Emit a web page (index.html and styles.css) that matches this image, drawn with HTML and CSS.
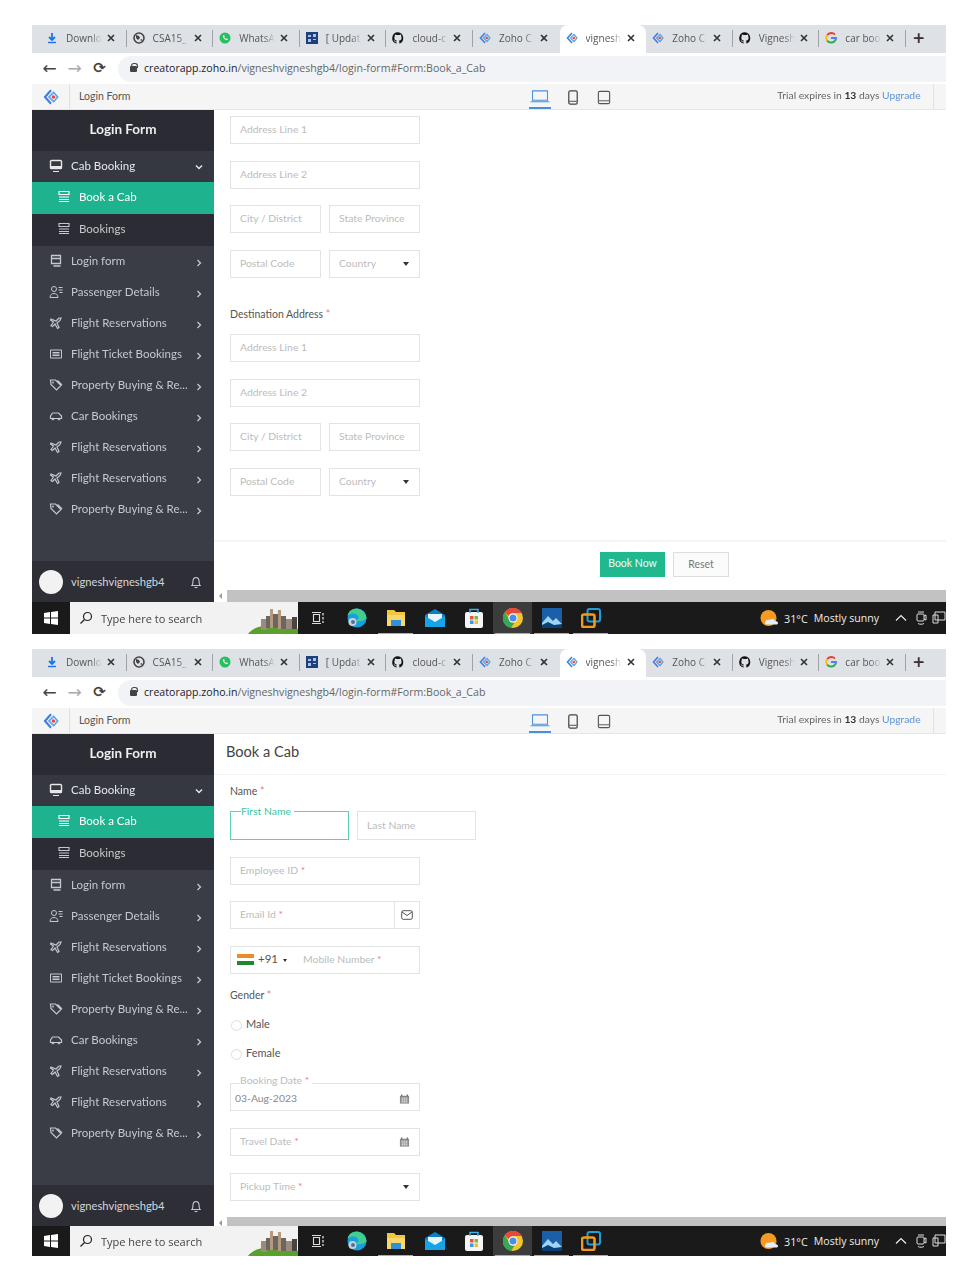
FILE: index.html
```html
<!DOCTYPE html>
<html lang="en">
<head>
<meta charset="utf-8">
<title>Book a Cab</title>
<link rel="stylesheet" href="styles.css">
</head>
<body>
<svg class="defs" xmlns="http://www.w3.org/2000/svg">
  <symbol id="f-dl" viewBox="0 0 12 12"><path d="M6 1v6.500M3 5l3 3 3-3" fill="none" stroke="#1a73e8" stroke-width="1.800"/><path d="M2 10.500h8" stroke="#1a73e8" stroke-width="1.400"/></symbol>
  <symbol id="f-globe" viewBox="0 0 12 12"><circle cx="6" cy="6" r="5" fill="none" stroke="#444" stroke-width="1.600"/><path d="M3 3l3 1 1 2-2 2-2-2zM7 8l2-1v2z" fill="#444"/></symbol>
  <symbol id="f-wa" viewBox="0 0 12 12"><circle cx="6" cy="6" r="5.500" fill="#25c15f"/><path d="M4 3.500c-.6 2 1.800 4.700 4.300 4.700l.6-1.200-1.400-.7-.6.6c-.8-.4-1.300-1-1.700-1.700l.6-.6-.7-1.400z" fill="#fff"/></symbol>
  <symbol id="f-sq" viewBox="0 0 12 12"><rect width="12" height="12" fill="#1f3f7a"/><path d="M2 3h3v2H2zM7 2h3v3H7zM2 7h3v3H2zM7 7h3v1H7z" fill="#a9c2ea"/></symbol>
  <symbol id="f-gh" viewBox="0 0 12 12"><path d="M6 .3a5.800 5.800 0 0 0-1.800 11.300c.3 0 .4-.1.4-.3v-1c-1.600.3-2-.7-2-.7-.3-.7-.7-.9-.7-.9-.5-.4 0-.4 0-.4.6 0 .9.600.9.600.5.900 1.400.600 1.800.500 0-.4.200-.6.400-.8-1.300-.1-2.700-.6-2.700-2.900 0-.6.200-1.200.6-1.600-.1-.2-.3-.8 0-1.600 0 0 .5-.1 1.600.6a5.500 5.500 0 0 1 2.900 0c1.100-.7 1.600-.6 1.600-.6.300.8.100 1.400 0 1.600.4.400.6 1 .6 1.600 0 2.300-1.400 2.800-2.700 2.900.2.200.4.500.4 1v1.500c0 .2.100.3.400.3A5.800 5.800 0 0 0 6 .3z" fill="#111"/></symbol>
  <symbol id="f-zoho" viewBox="0 0 12 12"><path d="M6 1 1.500 6 6 11" fill="none" stroke="#3f7fe0" stroke-width="1.600"/><path d="M8 2.500 4.500 6 8 9.500 11 6z" fill="none" stroke="#5aa0e8" stroke-width="1.200"/><circle cx="7.800" cy="6" r="1.300" fill="#e8473f"/></symbol>
  <symbol id="f-g" viewBox="0 0 12 12"><path d="M10 2.600A5 5 0 0 0 2.200 3.300" fill="none" stroke="#ea4335" stroke-width="2"/><path d="M2.200 3.300a5 5 0 0 0 0 5.400" fill="none" stroke="#fbbc05" stroke-width="2"/><path d="M2.200 8.700A5 5 0 0 0 10.500 8" fill="none" stroke="#34a853" stroke-width="2"/><path d="M6 6h5a5 5 0 0 1-.5 2" fill="none" stroke="#4285f4" stroke-width="2"/></symbol>
  <symbol id="x" viewBox="0 0 8 8"><path d="M1 1l6 6M7 1 1 7" stroke="#333" stroke-width="1.600"/></symbol>

  <symbol id="s-mon" viewBox="0 0 14 14"><rect x="1.500" y="1.500" width="11" height="8" rx="1" fill="none" stroke="currentColor" stroke-width="1.400"/><path d="M1.500 7.500h11v2h-11zM4 12.500h6" fill="currentColor" stroke="currentColor"/></symbol>
  <symbol id="s-list" viewBox="0 0 14 14"><path d="M2 2.500h10v3H2zM2 8h10" fill="none" stroke="currentColor" stroke-width="1.100"/><path d="M2 10.500h10M2 12.500h10" stroke="currentColor" stroke-width="1.100"/></symbol>
  <symbol id="s-form" viewBox="0 0 14 14"><path d="M2.500 1.500h9v8h-9zM2.500 4.500h9M4.500 12h7" fill="none" stroke="currentColor" stroke-width="1.300"/></symbol>
  <symbol id="s-user" viewBox="0 0 14 14"><circle cx="5" cy="4" r="2.500" fill="none" stroke="currentColor"/><path d="M1 12.500c0-3 2-4 4-4s4 1 4 4zM9.500 2.500h4M9.500 5h4M10.500 7.500h3" fill="none" stroke="currentColor"/></symbol>
  <symbol id="s-fly" viewBox="0 0 14 14"><path d="M2 3l5 2 3-3 2 0-1 2.500-3 2.500 2 4.500-1.500 1L6 8 3.500 10.500 2 9.500 4.500 6 1.500 4z" fill="none" stroke="currentColor" stroke-width="1.200"/></symbol>
  <symbol id="s-tick" viewBox="0 0 14 14"><path d="M1.500 3h11v8h-11zM3.500 5.500h7M3.500 7h7M3.500 8.500h7" fill="none" stroke="currentColor" stroke-width="1"/></symbol>
  <symbol id="s-tag" viewBox="0 0 14 14"><path d="M1.500 2h5l5.500 5.500-4.500 4.500L2 6.500zM8.500 2.500l4.500 4.500" fill="none" stroke="currentColor" stroke-width="1.200"/><circle cx="4" cy="4.500" r=".9" fill="currentColor"/></symbol>
  <symbol id="s-car" viewBox="0 0 14 14"><path d="M1.500 9.500V7l2-3h6l3 3v2.500z" fill="none" stroke="currentColor" stroke-width="1.200"/><circle cx="4" cy="10" r="1.300" fill="currentColor"/><circle cx="10" cy="10" r="1.300" fill="currentColor"/></symbol>
  <symbol id="s-bell" viewBox="0 0 14 14"><path d="M3 10.500c1-1 .8-3 1-5 .3-2 1.500-3 3-3s2.700 1 3 3c.2 2 0 4 1 5zM5.500 12.500h3" fill="none" stroke="currentColor" stroke-width="1.100"/></symbol>
  <symbol id="s-right" viewBox="0 0 6 8"><path d="M1.500 1 4.500 4l-3 3" fill="none" stroke="currentColor" stroke-width="1.300"/></symbol>
  <symbol id="s-down" viewBox="0 0 8 6"><path d="M1 1.500l3 3 3-3" fill="none" stroke="currentColor" stroke-width="1.500"/></symbol>

  <symbol id="d-lap" viewBox="0 0 22 16"><path d="M3 2h16v10H3zM1 13.500h20" fill="none" stroke="#4a90d9" stroke-width="1.100"/></symbol>
  <symbol id="d-ph" viewBox="0 0 12 16"><rect x="1.500" y="1" width="9" height="14" rx="1.500" fill="none" stroke="#444" stroke-width="1.300"/><path d="M2 12h8" stroke="#444"/></symbol>
  <symbol id="d-tab" viewBox="0 0 14 16"><rect x="1" y="1.500" width="12" height="13" rx="1.500" fill="none" stroke="#555" stroke-width="1.200"/><path d="M1.500 11.500h11" stroke="#555"/></symbol>
  <symbol id="mail" viewBox="0 0 12 10"><rect x=".7" y=".7" width="10.600" height="8.600" rx="1.500" fill="none" stroke="#555"/><path d="M1 2l5 3.500L11 2" fill="none" stroke="#555"/></symbol>
  <symbol id="cal" viewBox="0 0 12 12"><path d="M1 2.500h10V11H1z" fill="#888"/><path d="M3 1v2M9 1v2" stroke="#555" stroke-width="1.200"/><path d="M2 5h8M2 7h8M2 9h8M4 4.500V10.500M6 4.500V10.500M8 4.500V10.500" stroke="#e8e8e8" stroke-width=".6"/></symbol>

  <symbol id="t-win" viewBox="0 0 14 14"><path d="M0 2l6-1v5.500H0zM7 .9 14 0v6.500H7zM0 7.500h6V13l-6-1zM7 7.500h7V14l-7-1z" fill="#fff"/></symbol>
  <symbol id="t-search" viewBox="0 0 14 14"><circle cx="8.500" cy="5.500" r="4" fill="none" stroke="#222" stroke-width="1.200"/><path d="M5.500 8.500 1.500 12.500" stroke="#222" stroke-width="1.300"/></symbol>
  <symbol id="t-view" viewBox="0 0 14 14"><path d="M2.500 3.500h6v7h-6zM1 1.500h9M1 12.500h9" fill="none" stroke="#ddd" stroke-width="1.100"/><path d="M12 2v2.500M12 6v2.500M12 10v2" stroke="#ddd" stroke-width="1.300"/></symbol>
  <symbol id="t-edge" viewBox="0 0 20 20"><circle cx="10" cy="10" r="9.500" fill="#1b9de2"/><path d="M19.500 10C19 4.500 14 .5 9.500.5 5 .5 1 3.500.500 8c2-3 9-4 11 1 .5 2-1 3-3 3 2 2 7 2 11.500-2z" fill="#3fd08f"/><circle cx="5.500" cy="14" r="4" fill="#c7d2dc"/><circle cx="6" cy="14" r="2" fill="#56738c"/></symbol>
  <symbol id="t-files" viewBox="0 0 20 18"><path d="M1 1h7l2 2h9v14H1z" fill="#f4c542"/><path d="M1 6h18v11H1z" fill="#f9d86b"/><path d="M5 11h10v6H5z" fill="#2f8fd8"/></symbol>
  <symbol id="t-mail" viewBox="0 0 20 18"><path d="M0 6 10 0l10 6v12H0z" fill="#0b7fc7"/><path d="M3 5h14v6l-7 3-7-3z" fill="#e9f5fc"/><path d="M0 7l10 6 10-6v11H0z" fill="#15a5e6"/></symbol>
  <symbol id="t-store" viewBox="0 0 20 20"><rect x="1" y="4" width="18" height="16" rx="2" fill="#f5f5f5"/><path d="M6 5V1.500h8V5" fill="none" stroke="#3cb6e8" stroke-width="1.500"/><path d="M6 8h3.500v3.500H6z" fill="#e8533f"/><path d="M10.500 8H14v3.500h-3.500z" fill="#7fba3a"/><path d="M6 12.500h3.500V16H6z" fill="#2f9bea"/><path d="M10.500 12.500H14V16h-3.500z" fill="#f4bc2f"/></symbol>
  <symbol id="t-chrome" viewBox="0 0 20 20"><circle cx="10" cy="10" r="10" fill="#f4c430"/><path d="M10 0a10 10 0 0 1 8.700 5H10a5 5 0 0 0-4.600 3L1.800 3.900A10 10 0 0 1 10 0z" fill="#e5483c"/><path d="M1.800 3.900 6 11a5 5 0 0 0 5.500 3.800L8 20A10 10 0 0 1 1.800 3.900z" fill="#3aa757"/><circle cx="10" cy="10" r="4.500" fill="#fff"/><circle cx="10" cy="10" r="3.500" fill="#4b8cf0"/></symbol>
  <symbol id="t-photo" viewBox="0 0 20 20"><rect width="20" height="20" fill="#1b5fa8"/><path d="M0 15l6-7 5 5 3-3 6 6v4H0z" fill="#9fd4f5"/><path d="M0 20v-3l6-3 6 3 8-1v4z" fill="#0b3f78"/></symbol>
  <symbol id="t-copy" viewBox="0 0 20 20"><rect x="6.500" y="1" width="12.500" height="12.500" rx="2" fill="none" stroke="#1f9fd6" stroke-width="2"/><rect x="1" y="6.500" width="12.500" height="12.500" rx="2" fill="none" stroke="#f29a1f" stroke-width="2.600"/></symbol>
  <symbol id="t-sun" viewBox="0 0 18 18"><circle cx="8.500" cy="9" r="8" fill="#f59b23"/><path d="M5 14c0-3 3-4 5-3 1-2 5-1 5 1 2 0 3 1 3 2s-1 1.500-2 1.500H7c-1 0-2-.5-2-1.500z" fill="#e6eef5"/></symbol>
  <symbol id="t-up" viewBox="0 0 12 8"><path d="M1 6.500 6 1.500l5 5" fill="none" stroke="#eee" stroke-width="1.200"/></symbol>
  <symbol id="t-meet" viewBox="0 0 12 14"><rect x="2" y="3" width="7" height="7" rx="1" fill="none" stroke="#ddd"/><path d="M3 1h6M3 12.500c2 1 4 1 6 0M9 5l2-1v5l-2-1" fill="none" stroke="#ddd"/></symbol>
  <symbol id="t-net" viewBox="0 0 14 14"><path d="M3 1h10v8H3zM1 4h5v8H1z" fill="#1a1a1a" stroke="#ddd"/></symbol>
  <symbol id="t-city" viewBox="0 0 50 28"><path d="M0 28c6-8 18-10 26-7 8-3 18-2 24 2v5z" fill="#5aa02c"/><path d="M13 13h6v11h-6zM38 13h6v10h-6z" fill="#9a8b7d"/><path d="M22 3h3v19h-3zM30 4h3v19h-3z" fill="#b39a7c"/><path d="M25 8h5v14h-5zM18 10h4v12h-4zM33 10h5v13h-5z" fill="#6c6560"/><path d="M44 11h5v12h-5z" fill="#4a4540"/></symbol>
</svg>

<section class="shot">
  <div class="tabs">
    <div class="tab"><svg class="fav"><use href="#f-dl"/></svg><span class="tab-t">Downlo</span><svg class="close"><use href="#x"/></svg></div>
    <div class="tab"><svg class="fav"><use href="#f-globe"/></svg><span class="tab-t">CSA15_</span><svg class="close"><use href="#x"/></svg></div>
    <div class="tab"><svg class="fav"><use href="#f-wa"/></svg><span class="tab-t">WhatsA</span><svg class="close"><use href="#x"/></svg></div>
    <div class="tab"><svg class="fav"><use href="#f-sq"/></svg><span class="tab-t">[ Updat</span><svg class="close"><use href="#x"/></svg></div>
    <div class="tab"><svg class="fav"><use href="#f-gh"/></svg><span class="tab-t">cloud-c</span><svg class="close"><use href="#x"/></svg></div>
    <div class="tab"><svg class="fav"><use href="#f-zoho"/></svg><span class="tab-t">Zoho C</span><svg class="close"><use href="#x"/></svg></div>
    <div class="tab tab-on"><svg class="fav"><use href="#f-zoho"/></svg><span class="tab-t">vignesh</span><svg class="close"><use href="#x"/></svg></div>
    <div class="tab"><svg class="fav"><use href="#f-zoho"/></svg><span class="tab-t">Zoho C</span><svg class="close"><use href="#x"/></svg></div>
    <div class="tab"><svg class="fav"><use href="#f-gh"/></svg><span class="tab-t">Vignesh</span><svg class="close"><use href="#x"/></svg></div>
    <div class="tab"><svg class="fav"><use href="#f-g"/></svg><span class="tab-t">car boo</span><svg class="close"><use href="#x"/></svg></div>
    <span class="plus">+</span>
  </div>
  <div class="toolbar">
    <span class="nav">←</span><span class="nav nav-off">→</span><span class="nav nav-re">⟳</span>
    <div class="pill"><span class="lock"></span><span class="url"><b>creatorapp.zoho.in</b>/vigneshvigneshgb4/login-form#Form:Book_a_Cab</span></div>
  </div>
  <div class="appbar">
    <div class="logo"><svg class="logo-i"><use href="#f-zoho"/></svg></div>
    <span class="app-name">Login Form</span>
    <div class="devices">
      <svg class="dev dev-on"><use href="#d-lap"/></svg>
      <svg class="dev"><use href="#d-ph"/></svg>
      <svg class="dev"><use href="#d-tab"/></svg>
    </div>
    <div class="trial">Trial expires in <b>13</b> days <a class="up">Upgrade</a></div>
  </div>
  <div class="main">
    <aside class="side">
      <div class="side-title">Login Form</div>
      <div class="row row-open"><svg class="ic"><use href="#s-mon"/></svg><span class="lbl">Cab Booking</span><svg class="chev-d"><use href="#s-down"/></svg></div>
      <div class="row sub sub-on"><svg class="ic"><use href="#s-list"/></svg><span class="lbl">Book a Cab</span></div>
      <div class="row sub"><svg class="ic"><use href="#s-list"/></svg><span class="lbl">Bookings</span></div>
      <div class="row"><svg class="ic"><use href="#s-form"/></svg><span class="lbl">Login form</span><svg class="chev"><use href="#s-right"/></svg></div>
      <div class="row"><svg class="ic"><use href="#s-user"/></svg><span class="lbl">Passenger Details</span><svg class="chev"><use href="#s-right"/></svg></div>
      <div class="row"><svg class="ic"><use href="#s-fly"/></svg><span class="lbl">Flight Reservations</span><svg class="chev"><use href="#s-right"/></svg></div>
      <div class="row"><svg class="ic"><use href="#s-tick"/></svg><span class="lbl">Flight Ticket Bookings</span><svg class="chev"><use href="#s-right"/></svg></div>
      <div class="row"><svg class="ic"><use href="#s-tag"/></svg><span class="lbl">Property Buying &amp; Re...</span><svg class="chev"><use href="#s-right"/></svg></div>
      <div class="row"><svg class="ic"><use href="#s-car"/></svg><span class="lbl">Car Bookings</span><svg class="chev"><use href="#s-right"/></svg></div>
      <div class="row"><svg class="ic"><use href="#s-fly"/></svg><span class="lbl">Flight Reservations</span><svg class="chev"><use href="#s-right"/></svg></div>
      <div class="row"><svg class="ic"><use href="#s-fly"/></svg><span class="lbl">Flight Reservations</span><svg class="chev"><use href="#s-right"/></svg></div>
      <div class="row"><svg class="ic"><use href="#s-tag"/></svg><span class="lbl">Property Buying &amp; Re...</span><svg class="chev"><use href="#s-right"/></svg></div>
      <div class="side-foot"><span class="avatar"></span><span class="uname">vigneshvigneshgb4</span><svg class="bell"><use href="#s-bell"/></svg></div>
    </aside>
    <div class="content">
      <div class="form form-top">
        <div class="f w-full">Address Line 1</div>
        <div class="f w-full">Address Line 2</div>
        <div class="pair"><div class="f">City / District</div><div class="f">State Province</div></div>
        <div class="pair"><div class="f">Postal Code</div><div class="f f-sel">Country<i class="caret"></i></div></div>
        <div class="label label-dest">Destination Address <em>*</em></div>
        <div class="f w-full">Address Line 1</div>
        <div class="f w-full">Address Line 2</div>
        <div class="pair"><div class="f">City / District</div><div class="f">State Province</div></div>
        <div class="pair"><div class="f">Postal Code</div><div class="f f-sel">Country<i class="caret"></i></div></div>
      </div>
      <div class="actions"><span class="btn btn-go">Book Now</span><span class="btn btn-reset">Reset</span></div>
      <div class="hscroll"><span class="hs-left"></span><span class="hs-thumb"></span></div>
    </div>
  </div>
  <div class="taskbar">
    <div class="start"><svg class="win"><use href="#t-win"/></svg></div>
    <div class="search"><svg class="s-ic"><use href="#t-search"/></svg><span class="s-txt">Type here to search</span><svg class="city"><use href="#t-city"/></svg></div>
    <div class="apps">
      <span class="app"><svg class="a-sm"><use href="#t-view"/></svg></span>
      <span class="app"><svg class="a-ic"><use href="#t-edge"/></svg></span>
      <span class="app app-run"><svg class="a-ic"><use href="#t-files"/></svg></span>
      <span class="app"><svg class="a-ic"><use href="#t-mail"/></svg></span>
      <span class="app"><svg class="a-ic"><use href="#t-store"/></svg></span>
      <span class="app app-run app-act"><svg class="a-ic"><use href="#t-chrome"/></svg></span>
      <span class="app app-run"><svg class="a-ic"><use href="#t-photo"/></svg></span>
      <span class="app app-run"><svg class="a-ic"><use href="#t-copy"/></svg></span>
    </div>
    <div class="tray"><svg class="sun"><use href="#t-sun"/></svg><span class="temp">31°C</span><span class="wx">Mostly sunny</span><svg class="up-i"><use href="#t-up"/></svg><svg class="meet"><use href="#t-meet"/></svg><svg class="net"><use href="#t-net"/></svg></div>
  </div>
</section>

<section class="shot shot-b">
  <div class="tabs">
    <div class="tab"><svg class="fav"><use href="#f-dl"/></svg><span class="tab-t">Downlo</span><svg class="close"><use href="#x"/></svg></div>
    <div class="tab"><svg class="fav"><use href="#f-globe"/></svg><span class="tab-t">CSA15_</span><svg class="close"><use href="#x"/></svg></div>
    <div class="tab"><svg class="fav"><use href="#f-wa"/></svg><span class="tab-t">WhatsA</span><svg class="close"><use href="#x"/></svg></div>
    <div class="tab"><svg class="fav"><use href="#f-sq"/></svg><span class="tab-t">[ Updat</span><svg class="close"><use href="#x"/></svg></div>
    <div class="tab"><svg class="fav"><use href="#f-gh"/></svg><span class="tab-t">cloud-c</span><svg class="close"><use href="#x"/></svg></div>
    <div class="tab"><svg class="fav"><use href="#f-zoho"/></svg><span class="tab-t">Zoho C</span><svg class="close"><use href="#x"/></svg></div>
    <div class="tab tab-on"><svg class="fav"><use href="#f-zoho"/></svg><span class="tab-t">vignesh</span><svg class="close"><use href="#x"/></svg></div>
    <div class="tab"><svg class="fav"><use href="#f-zoho"/></svg><span class="tab-t">Zoho C</span><svg class="close"><use href="#x"/></svg></div>
    <div class="tab"><svg class="fav"><use href="#f-gh"/></svg><span class="tab-t">Vignesh</span><svg class="close"><use href="#x"/></svg></div>
    <div class="tab"><svg class="fav"><use href="#f-g"/></svg><span class="tab-t">car boo</span><svg class="close"><use href="#x"/></svg></div>
    <span class="plus">+</span>
  </div>
  <div class="toolbar">
    <span class="nav">←</span><span class="nav nav-off">→</span><span class="nav nav-re">⟳</span>
    <div class="pill"><span class="lock"></span><span class="url"><b>creatorapp.zoho.in</b>/vigneshvigneshgb4/login-form#Form:Book_a_Cab</span></div>
  </div>
  <div class="appbar">
    <div class="logo"><svg class="logo-i"><use href="#f-zoho"/></svg></div>
    <span class="app-name">Login Form</span>
    <div class="devices">
      <svg class="dev dev-on"><use href="#d-lap"/></svg>
      <svg class="dev"><use href="#d-ph"/></svg>
      <svg class="dev"><use href="#d-tab"/></svg>
    </div>
    <div class="trial">Trial expires in <b>13</b> days <a class="up">Upgrade</a></div>
  </div>
  <div class="main">
    <aside class="side">
      <div class="side-title">Login Form</div>
      <div class="row row-open"><svg class="ic"><use href="#s-mon"/></svg><span class="lbl">Cab Booking</span><svg class="chev-d"><use href="#s-down"/></svg></div>
      <div class="row sub sub-on"><svg class="ic"><use href="#s-list"/></svg><span class="lbl">Book a Cab</span></div>
      <div class="row sub"><svg class="ic"><use href="#s-list"/></svg><span class="lbl">Bookings</span></div>
      <div class="row"><svg class="ic"><use href="#s-form"/></svg><span class="lbl">Login form</span><svg class="chev"><use href="#s-right"/></svg></div>
      <div class="row"><svg class="ic"><use href="#s-user"/></svg><span class="lbl">Passenger Details</span><svg class="chev"><use href="#s-right"/></svg></div>
      <div class="row"><svg class="ic"><use href="#s-fly"/></svg><span class="lbl">Flight Reservations</span><svg class="chev"><use href="#s-right"/></svg></div>
      <div class="row"><svg class="ic"><use href="#s-tick"/></svg><span class="lbl">Flight Ticket Bookings</span><svg class="chev"><use href="#s-right"/></svg></div>
      <div class="row"><svg class="ic"><use href="#s-tag"/></svg><span class="lbl">Property Buying &amp; Re...</span><svg class="chev"><use href="#s-right"/></svg></div>
      <div class="row"><svg class="ic"><use href="#s-car"/></svg><span class="lbl">Car Bookings</span><svg class="chev"><use href="#s-right"/></svg></div>
      <div class="row"><svg class="ic"><use href="#s-fly"/></svg><span class="lbl">Flight Reservations</span><svg class="chev"><use href="#s-right"/></svg></div>
      <div class="row"><svg class="ic"><use href="#s-fly"/></svg><span class="lbl">Flight Reservations</span><svg class="chev"><use href="#s-right"/></svg></div>
      <div class="row"><svg class="ic"><use href="#s-tag"/></svg><span class="lbl">Property Buying &amp; Re...</span><svg class="chev"><use href="#s-right"/></svg></div>
      <div class="side-foot"><span class="avatar"></span><span class="uname">vigneshvigneshgb4</span><svg class="bell"><use href="#s-bell"/></svg></div>
    </aside>
    <div class="content">
      <h1 class="page-h">Book a Cab</h1>
      <div class="form form-b">
        <div class="label label-name">Name <em>*</em></div>
        <div class="names"><div class="f f-focus"><span class="float float-on">First Name</span></div><div class="f">Last Name</div></div>
        <div class="f w-full">Employee ID <em>*</em></div>
        <div class="f w-full f-mail"><span>Email Id <em>*</em></span><span class="addon"><svg class="mail"><use href="#mail"/></svg></span></div>
        <div class="f w-full f-tel"><span class="flag"></span><span class="cc">+91</span><i class="caret caret-sm"></i><span class="tel-ph">Mobile Number <em>*</em></span></div>
        <div class="label label-g">Gender <em>*</em></div>
        <div class="radio"><span class="r-dot"></span>Male</div>
        <div class="radio"><span class="r-dot"></span>Female</div>
        <div class="f w-full f-date f-val"><span class="float">Booking Date <em>*</em></span><span>03-Aug-2023</span><svg class="cal"><use href="#cal"/></svg></div>
        <div class="f w-full f-date"><span>Travel Date <em>*</em></span><svg class="cal"><use href="#cal"/></svg></div>
        <div class="f w-full f-sel">Pickup Time <em>*</em><i class="caret"></i></div>
      </div>
      <div class="hscroll"><span class="hs-left"></span><span class="hs-thumb"></span></div>
    </div>
  </div>
  <div class="taskbar">
    <div class="start"><svg class="win"><use href="#t-win"/></svg></div>
    <div class="search"><svg class="s-ic"><use href="#t-search"/></svg><span class="s-txt">Type here to search</span><svg class="city"><use href="#t-city"/></svg></div>
    <div class="apps">
      <span class="app"><svg class="a-sm"><use href="#t-view"/></svg></span>
      <span class="app"><svg class="a-ic"><use href="#t-edge"/></svg></span>
      <span class="app app-run"><svg class="a-ic"><use href="#t-files"/></svg></span>
      <span class="app"><svg class="a-ic"><use href="#t-mail"/></svg></span>
      <span class="app"><svg class="a-ic"><use href="#t-store"/></svg></span>
      <span class="app app-run app-act"><svg class="a-ic"><use href="#t-chrome"/></svg></span>
      <span class="app app-run"><svg class="a-ic"><use href="#t-photo"/></svg></span>
      <span class="app app-run"><svg class="a-ic"><use href="#t-copy"/></svg></span>
    </div>
    <div class="tray"><svg class="sun"><use href="#t-sun"/></svg><span class="temp">31°C</span><span class="wx">Mostly sunny</span><svg class="up-i"><use href="#t-up"/></svg><svg class="meet"><use href="#t-meet"/></svg><svg class="net"><use href="#t-net"/></svg></div>
  </div>
</section>
</body>
</html>
```

FILE: styles.css
```css
* { box-sizing: border-box; }
html, body { margin: 0; height: 100%; background: #fff; }
body { padding: 25px 0 0 32px; font-family: Lato, "Liberation Sans", sans-serif; overflow: hidden; }
.defs { display: none; }

.shot { width: 914px; height: 609px; margin-bottom: 15px; display: flex; flex-direction: column; overflow: hidden; filter: blur(.45px); }
.shot-b { height: 607px; margin-bottom: 0; }

/* browser tabs */
.tabs { height: 28px; background: #dee1e6; display: flex; align-items: stretch; padding-left: 8px; flex: none; }
.tab { width: 86.6px; flex: none; padding: 0 8px 2px 6px; display: flex; align-items: center; position: relative; }
.tab::after { content: ""; position: absolute; right: 0; top: 5px; width: 1px; height: 17px; background: #9ea3a9; }
.tab:nth-child(6)::after, .tab:nth-child(7)::after { display: none; }
.tab-on { background: #fff; border-radius: 8px 8px 0 0; }
.fav { width: 12px; height: 12px; flex: none; }
.tab-t { font: 10px "Open Sans", sans-serif; color: #555; margin-left: 8px; width: 38px; flex: none; white-space: nowrap; -webkit-mask-image: linear-gradient(90deg, #000 65%, transparent 95%); mask-image: linear-gradient(90deg, #000 65%, transparent 95%); }
.close { width: 8px; height: 8px; margin-left: 3px; flex: none; }
.plus { font: 600 20px/26px "Open Sans", sans-serif; color: #333; margin-left: 7px; }

/* address bar */
.toolbar { height: 31px; background: #fff; display: flex; align-items: center; padding-left: 5px; flex: none; }
.nav { width: 25px; padding-bottom: 2px; text-align: center; font: 17px/24px "DejaVu Sans", sans-serif; color: #444; }
.nav-off { color: #aaa; }
.nav-re { font-size: 15px; font-weight: 700; }
.pill { margin-left: 6px; flex: 1; height: 26px; background: #f1f3f6; border-radius: 13px 0 0 13px; display: flex; align-items: center; padding: 0 0 2px 12px; }
.lock { width: 7px; height: 6px; margin: 2px 0 0 0; background: #444; border-radius: 1px; position: relative; }
.lock::before { content: ""; position: absolute; left: 1px; top: -3px; width: 5px; height: 4px; border: 1px solid #444; border-bottom: 0; border-radius: 3px 3px 0 0; }
.url { font: 10.6px "Open Sans", sans-serif; color: #666; margin-left: 7px; white-space: nowrap; }
.url b { font-weight: 400; color: #222; }

/* app bar */
.appbar { height: 26px; background: #f5f5f5; border-bottom: 1px solid #e6e6e6; display: flex; align-items: center; flex: none; }
.logo { width: 38px; height: 100%; border-right: 1px solid #e0e0e0; display: flex; align-items: center; padding-left: 11px; }
.logo-i { width: 16px; height: 16px; }
.app-name { font-size: 10.5px; color: #555; margin: 0 0 2px 9px; }
.devices { display: flex; align-items: center; margin-left: 399px; height: 100%; }
.dev { width: 14px; height: 15px; margin: 1px 17px 0 0; }
.dev-on { width: 22px; height: 24px; padding: 4px 0 3px; border-bottom: 2px solid #4a90d9; margin: 0 15px 0 0; }
.trial { margin-left: 149px; padding-right: 12px; height: 100%; border-right: 1px solid #e2e2e2; font-size: 10.3px; line-height: 23px; color: #666; white-space: nowrap; }
.trial b { color: #333; }
.up { color: #5b92d6; }

/* main */
.main { flex: none; height: 492px; display: flex; }
.side { width: 182px; flex: none; background: #3a3c46; display: flex; flex-direction: column; color: #c6c8ce; }
.side-title { height: 41px; background: #2b2b33; color: #eee; font-size: 13.5px; font-weight: 700; text-align: center; line-height: 39px; flex: none; }
.row { height: 31px; display: flex; align-items: center; padding: 0 0 2px 17px; font-size: 11.5px; flex: none; }
.row-open { background: #363841; color: #e6e6e6; }
.sub { height: 32px; padding: 0 0 4px 25px; background: #2c2c34; }
.sub-on { background: #1fb28e; color: #fff; }
.ic { width: 14px; height: 14px; flex: none; }
.lbl { margin-left: 8px; white-space: nowrap; flex: 1; }
.chev { width: 6px; height: 8px; margin-right: 12px; margin-top: 4px; flex: none; }
.chev-d { width: 8px; height: 6px; margin-right: 11px; margin-top: 3px; flex: none; }
.side-foot { margin-top: auto; height: 41px; background: #2e2e37; display: flex; align-items: center; padding-left: 7px; flex: none; }
.avatar { width: 24px; height: 24px; border-radius: 50%; background: #f2f2f2; flex: none; }
.uname { margin-left: 8px; font-size: 11.2px; flex: 1; color: #d4d5d9; }
.bell { width: 14px; height: 14px; margin-right: 11px; flex: none; }

.content { flex: 1; min-width: 0; background: #fff; display: flex; flex-direction: column; }
.page-h { margin: 0; height: 41px; flex: none; padding-left: 12px; font-size: 14.6px; font-weight: 400; line-height: 35px; color: #444; border-bottom: 1px solid #f3f3f3; }
.form { flex: 1; padding-left: 16px; display: flex; flex-direction: column; align-items: flex-start; }
.form-top { padding-top: 6px; }
.form-b { padding-top: 9px; }

.f { width: 91px; height: 28px; border: 1px solid #e3e3e3; padding: 0 0 2px 9px; font-size: 10.4px; line-height: 24px; color: #bcbcbc; margin-bottom: 16.5px; flex: none; position: relative; white-space: nowrap; background: #fff; }
.f em, .label em { color: #e58080; font-style: normal; }
.w-full { width: 190px; }
.pair { display: flex; gap: 8px; width: 190px; }
.f-sel { display: flex; align-items: center; justify-content: space-between; padding-right: 10px; }
.f-sel em { position: absolute; left: 67px; }
.caret { width: 0; height: 0; margin-top: 3px; border: 3px solid transparent; border-top: 4px solid #333; border-bottom: 0; flex: none; }
.label { font-size: 10.5px; color: #555; }
.label-dest { margin: 14px 0 13px; line-height: 13px; }

.actions { height: 50px; flex: none; border-top: 2px solid #f5f5f5; padding: 10px 0 0 386px; display: flex; gap: 8px; align-items: flex-start; }
.btn { height: 25px; font-size: 10.5px; line-height: 23px; text-align: center; }
.btn-go { width: 65px; background: #1fb88f; color: #e8fff8; }
.btn-reset { width: 56px; background: #fbfbfb; border: 1px solid #dedede; color: #777; line-height: 22px; }

.hscroll { height: 12px; flex: none; background: #fff; display: flex; align-items: stretch; }
.hs-left { width: 13px; position: relative; }
.hs-left::before { content: ""; position: absolute; left: 5px; top: 3px; border: 3px solid transparent; border-right: 3px solid #999; border-left: 0; }
.hs-thumb { flex: 1; background: #c2c2c2; }

/* second form */
.label-name { line-height: 14px; margin-bottom: 13px; }
.names { display: flex; gap: 8px; }
.names .f { width: 119px; height: 29px; line-height: 26px; }
.f-focus { border-color: #5ccfb6; }
.float { position: absolute; left: 9px; top: -8px; padding: 0 3px 0 0; background: #fff; line-height: 14px; font-size: 10.4px; }
.float-on { left: 10px; color: #3cc4a4; padding: 0 3px 0 0; }
.f-mail { display: flex; justify-content: space-between; padding-right: 0; }
.addon { width: 25px; margin-bottom: -2px; border-left: 1px solid #e3e3e3; display: flex; align-items: center; justify-content: center; }
.mail { width: 12px; height: 10px; }
.f-tel { display: flex; align-items: center; padding-left: 6px; }
.flag { width: 17px; height: 11px; margin-top: 1px; background: linear-gradient(#f08a24 0 34%, #fff 34% 66%, #1c8a2c 66%); flex: none; }
.cc { font-size: 11.5px; color: #555; margin-left: 4px; }
.caret-sm { margin-left: 5px; border-width: 2px; border-top-width: 3px; border-bottom: 0; }
.tel-ph { margin-left: 16px; }
.label-g { line-height: 14px; margin: -2px 0 15px; }
.radio { display: flex; align-items: flex-start; font-size: 11px; color: #555; height: 29px; line-height: 14px; flex: none; }
.r-dot { width: 11px; height: 11px; margin: 3px 4px 0 1px; border: 1px solid #ddd; border-radius: 50%; }
.f-date { display: flex; justify-content: space-between; align-items: center; padding-right: 9px; }
.f-val { margin: 8px 0 17px; padding: 2px 9px 0 4px; color: #888; }
.f-val .float { color: #bcbcbc; left: 9px; top: -11px; }
.cal { width: 11px; height: 12px; margin-top: 2px; }

/* windows taskbar */
.taskbar { flex: 1; background: #1a1a1a; display: flex; align-items: stretch; min-height: 30px; }
.start { width: 38px; flex: none; display: flex; align-items: center; justify-content: center; }
.win { width: 14px; height: 14px; }
.search { width: 228px; flex: none; background: #f2f2f2; display: flex; align-items: center; padding-left: 9px; position: relative; overflow: hidden; }
.s-ic { width: 14px; height: 14px; }
.s-txt { font: 11px "Open Sans", sans-serif; color: #444; margin-left: 8px; }
.city { position: absolute; right: 0; bottom: 0; width: 50px; height: 28px; }
.apps { display: flex; flex: none; }
.app { width: 39px; display: flex; align-items: center; justify-content: center; position: relative; }
.app-run::after { content: ""; position: absolute; left: 2px; right: 2px; bottom: 0; height: 1.5px; background: #7fb8e6; }
.app-act { background: #3c3c3c; }
.a-ic { width: 20px; height: 20px; }
.a-sm { width: 14px; height: 14px; }
.tray { flex: 1; min-width: 0; display: flex; align-items: center; padding-left: 150px; color: #ececec; white-space: nowrap; overflow: hidden; }
.sun { width: 18px; height: 18px; flex: none; }
.temp { font: 10.8px "Open Sans", sans-serif; margin-left: 6px; }
.wx { font: 10.6px "Open Sans", sans-serif; margin-left: 6px; }
.up-i { width: 12px; height: 8px; margin-left: 16px; flex: none; }
.meet { width: 12px; height: 14px; margin-left: 8px; flex: none; }
.net { width: 14px; height: 14px; margin-left: 5px; flex: none; }
```
